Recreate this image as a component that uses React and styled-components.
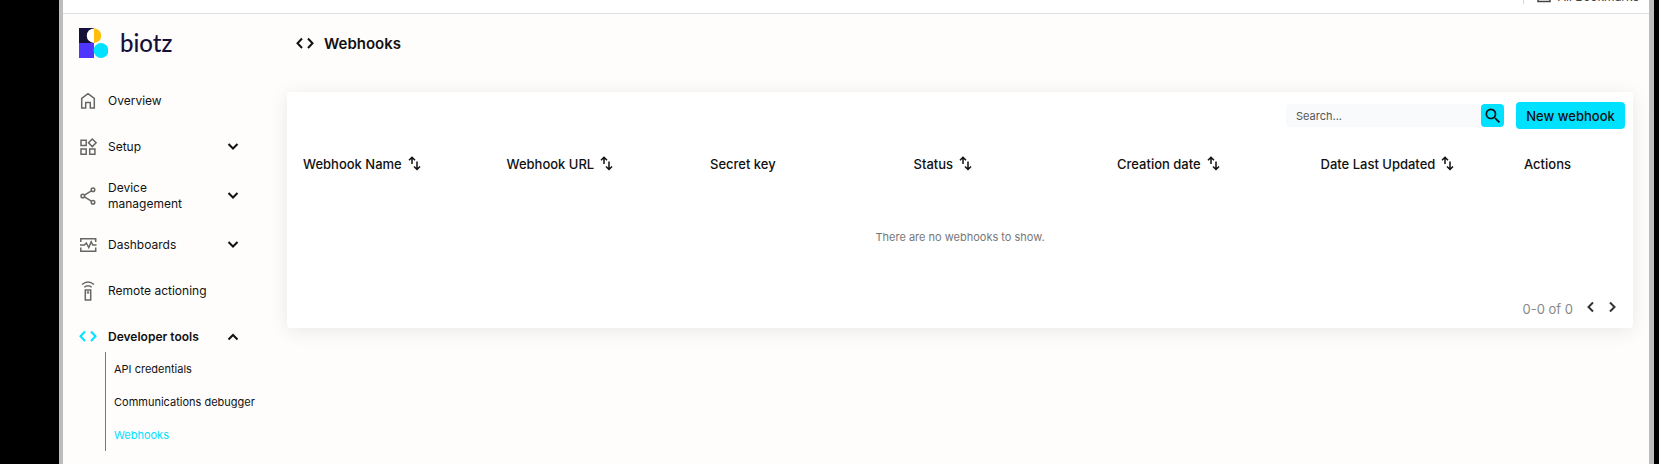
import React from "react";
import styled, { createGlobalStyle } from "styled-components";
import { MdSearch } from "react-icons/md";

const GlobalStyle = createGlobalStyle`
  *, *::before, *::after { box-sizing: border-box; }
  body {
    margin: 0;
    background: #000;
    color: #111;
    font-family: Inter, "Liberation Sans", sans-serif;
    font-size: 12px;
    line-height: 16px;
  }
  button, input { font: inherit; color: inherit; }
  button { border: 0; padding: 0; background: none; cursor: pointer; }
  a { color: inherit; text-decoration: none; }
  ul { list-style: none; margin: 0; padding: 0; }
`;

const Device = styled.div`
  min-height: 100vh;
  padding: 0 5px 0 59px;
  display: flex;
`;

const Screen = styled.div`
  flex: 1;
  min-width: 0;
  display: flex;
  flex-direction: column;
  border: solid #bdbdbd;
  border-width: 0 5px 0 4px;
  background: #fefdfc;
`;

const BookmarksBar = styled.div`
  height: 14px;
  flex: none;
  display: flex;
  justify-content: flex-end;
  align-items: flex-end;
  gap: 13px;
  padding: 0 10px 9px 0;
  overflow: hidden;
  background: #fff;
  border-bottom: 1px solid #dfe1e1;
`;

const BarDivider = styled.span`
  width: 1px;
  height: 16px;
  background: #c5dafa;
`;

const BookmarksLink = styled.a`
  display: flex;
  align-items: center;
  gap: 7px;
  margin-bottom: -1px;
  color: #444;
`;

const Body = styled.div`
  flex: 1;
  display: flex;
`;

const Sidebar = styled.aside`
  width: 224px;
  flex: none;
  padding: 14px 0 16px 15px;
`;

const Brand = styled.a`
  display: flex;
  align-items: center;
  gap: 12px;
  height: 30px;
  margin-bottom: 28px;
  color: #15103a;
  font-family: Lato, sans-serif;
  font-size: 24px;
  font-weight: 500;
  line-height: 30px;
`;

const NavList = styled.ul`
  display: flex;
  flex-direction: column;
  gap: 16px;
`;

const NavRow = styled.a`
  width: 161px;
  min-height: ${(p) => (p.$tall ? 36 : 30)}px;
  display: flex;
  align-items: center;
  gap: 10px;
  text-align: left;
  font-weight: ${(p) => (p.$open ? 600 : 400)};
`;

const NavLabel = styled.span`
  flex: 1;
`;

const SubList = styled.ul`
  margin-left: 27px;
  border-left: 1px solid #777;
`;

const SubLink = styled.a`
  display: flex;
  align-items: center;
  height: 33px;
  padding-left: 8px;
  font-size: 11px;
  white-space: nowrap;
  color: ${(p) => (p.$active ? "#00e0ff" : "inherit")};
`;

const Icon = styled.svg`
  flex: none;
  width: ${(p) => p.$size || 20}px;
  height: ${(p) => p.$size || 20}px;
  fill: none;
  stroke: ${(p) => p.$color || "#666"};
  stroke-width: ${(p) => p.$weight || 1.5};
`;

const Main = styled.main`
  flex: 1;
  min-width: 0;
  padding: 18px 16px 16px 0;
`;

const PageHeader = styled.header`
  display: flex;
  align-items: center;
  gap: 9px;
  height: 24px;
  margin: 0 0 36px 8px;
`;

const PageTitle = styled.h1`
  margin: 0;
  font-size: 15px;
  line-height: 24px;
  font-weight: 600;
`;

const Card = styled.section`
  background: #fff;
  border-radius: 4px;
  box-shadow: 0 3px 18px rgba(60, 50, 40, 0.1);
`;

const Toolbar = styled.div`
  display: flex;
  justify-content: flex-end;
  align-items: center;
  gap: 12px;
  padding: 10px 8px 0;
`;

const SearchBox = styled.form`
  display: flex;
  width: 218px;
  height: 23px;
  background: #f8fafc;
  border-radius: 4px;
`;

const SearchInput = styled.input`
  flex: 1;
  min-width: 0;
  border: 0;
  padding: 0 10px;
  background: transparent;
  font-size: 11px;
  &::placeholder { color: #555; opacity: 1; }
`;

const SearchButton = styled.button`
  width: 23px;
  height: 23px;
  display: grid;
  place-items: center;
  border-radius: 4px;
  background: #00e0ff;
`;

const PrimaryButton = styled.button`
  width: 109px;
  height: 27px;
  border-radius: 4px;
  background: #00e0ff;
  font-size: 13px;
  font-weight: 500;
  white-space: nowrap;
`;

const Table = styled.table`
  width: 100%;
  margin-top: 15px;
  table-layout: fixed;
  border-collapse: collapse;
`;

const HeadCell = styled.th`
  width: ${(p) => (p.$narrow ? "125px" : "auto")};
  height: 40px;
  padding: 0 0 0 16px;
  text-align: left;
  font-size: 13px;
  font-weight: 500;
  white-space: nowrap;
`;

const SortButton = styled.button`
  display: flex;
  align-items: center;
  gap: 5px;
`;

const EmptyCell = styled.td`
  height: 106px;
  padding: 0;
  text-align: center;
  font-size: 11px;
  color: #777;
`;

const Pagination = styled.footer`
  display: flex;
  justify-content: flex-end;
  align-items: center;
  height: 38px;
  padding-right: 11px;
  color: #888;
  font-size: 13px;
`;

const PageButton = styled.button`
  width: 21px;
  height: 20px;
  display: grid;
  place-items: center;
  margin-bottom: 4px;
`;

const PageRange = styled.span`
  margin-right: 7px;
`;

const HomeIcon = () => (
  <Icon viewBox="0 0 20 20"><path d="M3.7 17V7.3L10 2.7l6.3 4.6V17h-4v-5.5H7.7V17z" /></Icon>
);
const SetupIcon = () => (
  <Icon viewBox="0 0 20 20">
    <path d="M3 3.300h5.200v5.200H3zM3 12h5.200v5.200H3zM11.700 12h5.200v5.200h-5.200zM14.300 2l3.800 3.800-3.800 3.800-3.800-3.800z" />
  </Icon>
);
const ShareIcon = () => (
  <Icon viewBox="0 0 20 20">
    <circle cx="4.800" cy="10" r="1.800" /><circle cx="15" cy="3.800" r="1.800" /><circle cx="15" cy="16.200" r="1.800" />
    <path d="M6.400 9.100l7-4.300M6.400 10.900l7 4.300" />
  </Icon>
);
const DashboardIcon = () => (
  <Icon viewBox="0 0 20 20">
    <path d="M2.800 7V3.800h14.900V7M2.800 12.500v3.700h14.900v-3.700M2 10h4.500l1.800-2 2.500 4.500 2.400-5.700 1.600 3.200H18.500" />
  </Icon>
);
const RemoteIcon = () => (
  <Icon viewBox="0 0 20 20">
    <path d="M7.300 9h5.400v10H7.300zM4 3.500q6-5 12 0M6.300 6.200q3.700-2.900 7.400 0" />
    <circle cx="10" cy="11.500" r=".5" />
  </Icon>
);
const CodeIcon = ({ color }) => (
  <Icon viewBox="0 0 20 20" $color={color} $weight={2}><path d="M7 4.500L2.500 9.300 7 14M13 4.500l4.500 4.800L13 14" /></Icon>
);
const Chevron = ({ d, color = "#111" }) => (
  <Icon viewBox="0 0 12 12" $size={12} $color={color} $weight={2}><path d={d} /></Icon>
);
const SortIcon = () => (
  <Icon viewBox="0 0 14 16" $size={16} $color="#111" $weight={1.5}>
    <path d="M4 8V1.500M1 4.300l3-3 3 3M9 5.500v8M6 10.500l3 3 3-3" />
  </Icon>
);
const FolderIcon = () => (
  <Icon viewBox="0 0 14 14" $size={14} $color="#444"><path d="M1 2h5l1.500 1.500H13v8H1z" /></Icon>
);
const Logo = () => (
  <svg width="30" height="30" viewBox="0 0 30 30" aria-hidden="true">
    <path fill="#15103a" d="M1 0h15v15H1z" />
    <path fill="#4f36ff" d="M1 15h15v15H1z" />
    <path fill="#fff" d="M16 .5a7.200 7.200 0 0 0 0 14.400z" />
    <path fill="#ffbe0d" d="M16 .5a7.200 7.200 0 0 1 0 14.400z" />
    <circle cx="23" cy="22.500" r="7.400" fill="#00e0ff" />
  </svg>
);

const DOWN = "M1.500 3L6 7.500 10.500 3";
const UP = "M1.500 8.500L6 4l4.500 4.500";
const LEFT = "M8 1.500L3.500 6 8 10.500";
const RIGHT = "M4 1.500L8.500 6 4 10.500";

const NAV = [
  { label: "Overview", icon: <HomeIcon /> },
  { label: "Setup", icon: <SetupIcon />, group: true },
  { label: "Device management", icon: <ShareIcon />, group: true, tall: true },
  { label: "Dashboards", icon: <DashboardIcon />, group: true },
  { label: "Remote actioning", icon: <RemoteIcon /> },
  {
    label: "Developer tools",
    icon: <CodeIcon color="#00e0ff" />,
    group: true,
    children: ["API credentials", "Communications debugger", "Webhooks"],
  },
];

const COLUMNS = [
  { label: "Webhook Name", sortable: true },
  { label: "Webhook URL", sortable: true },
  { label: "Secret key" },
  { label: "Status", sortable: true },
  { label: "Creation date", sortable: true },
  { label: "Date Last Updated", sortable: true },
  { label: "Actions", narrow: true },
];

function NavItem({ item }) {
  const open = Boolean(item.children);
  const link = item.group ? { as: "button", "aria-expanded": open } : { href: "#" };
  return (
    <li>
      <NavRow {...link} $open={open} $tall={item.tall}>
        {item.icon}
        <NavLabel>{item.label}</NavLabel>
        {item.group && <Chevron d={open ? UP : DOWN} />}
      </NavRow>
      {open && (
        <SubList>
          {item.children.map((name) => (
            <li key={name}>
              <SubLink href="#" $active={name === "Webhooks"}>{name}</SubLink>
            </li>
          ))}
        </SubList>
      )}
    </li>
  );
}

export default function App() {
  return (
    <Device>
      <GlobalStyle />
      <Screen>
        <BookmarksBar>
          <BarDivider />
          <BookmarksLink href="#"><FolderIcon />All Bookmarks</BookmarksLink>
        </BookmarksBar>
        <Body>
          <Sidebar>
            <Brand href="#"><Logo />biotz</Brand>
            <nav>
              <NavList>
                {NAV.map((item) => <NavItem key={item.label} item={item} />)}
              </NavList>
            </nav>
          </Sidebar>
          <Main>
            <PageHeader>
              <CodeIcon color="#111" />
              <PageTitle>Webhooks</PageTitle>
            </PageHeader>
            <Card>
              <Toolbar>
                <SearchBox role="search" onSubmit={(e) => e.preventDefault()}>
                  <SearchInput type="text" placeholder="Search..." aria-label="Search" />
                  <SearchButton type="submit" aria-label="Search"><MdSearch size={20} /></SearchButton>
                </SearchBox>
                <PrimaryButton type="button">New webhook</PrimaryButton>
              </Toolbar>
              <Table>
                <thead>
                  <tr>
                    {COLUMNS.map((c) => (
                      <HeadCell key={c.label} scope="col" $narrow={c.narrow}>
                        {c.sortable ? <SortButton type="button">{c.label}<SortIcon /></SortButton> : c.label}
                      </HeadCell>
                    ))}
                  </tr>
                </thead>
                <tbody>
                  <tr><EmptyCell colSpan={COLUMNS.length}>There are no webhooks to show.</EmptyCell></tr>
                </tbody>
              </Table>
              <Pagination>
                <PageRange>0-0 of 0</PageRange>
                <PageButton type="button" aria-label="Previous page"><Chevron d={LEFT} color="#333" /></PageButton>
                <PageButton type="button" aria-label="Next page"><Chevron d={RIGHT} color="#333" /></PageButton>
              </Pagination>
            </Card>
          </Main>
        </Body>
      </Screen>
    </Device>
  );
}
